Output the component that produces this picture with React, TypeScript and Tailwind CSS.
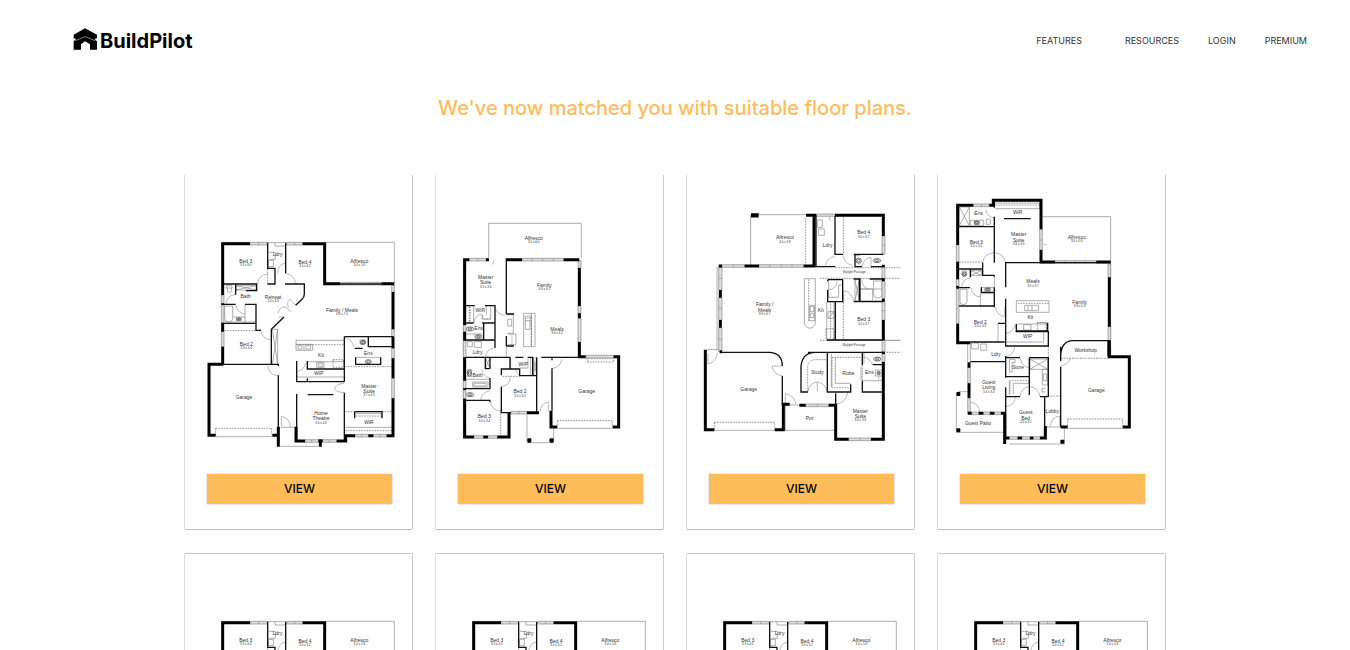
import React from "react";

type Label = { x: number; y: number; lines: string[]; size?: string };

type Plan = {
  name: string;
  viewBox: string;
  heavy: string;
  mid: string;
  light: string;
  doors: string;
  dashed: string;
  windows: string;
  fixtures: number[][];
  labels: Label[];
};

const planA: Plan = {
  name: "Four bedroom plan with home theatre",
  viewBox: "15 15 681 855",
  heavy:
    "M210 221H128V375M128 400V405M128 458V485M128 530V583M368 221H434V341H480M605 341H643M639 366V478M639 500V535M639 565V625M639 685V797H620M580 797H565M525 797H497V813H470M130 583H87V796H107M277 796H295V830M295 770V796M348 770V813H375M415 812H428M421 808V830",
  mid:
    "M263 218V295H285V342H262M317 218V310M132 342H230V362M230 347V362H198M167 342V374M167 403V403M132 403H167M195 403H228V460H132M228 460V481H243M315 342H373V372Q373 382 366 388L347 406M312 441L274 478V510M274 510V583M130 583H295V588M295 616V770M434 342H640M493 500V635M493 668V812M493 500H640M565 500V530H640M524 535H548M350 573V635H493M350 628V635M382 573V597H493M382 625V635M350 672V812M383 674H460M527 562V585M527 583H602V562M524 725V745M524 725H606V745",
  light:
    "M438 217H643V340M262 218H317M124 217H210M348 511H493M348 511V541H398V523H348M372 526V541M354 527H366V537H354ZM378 527H392V537H378ZM382 575H493M410 577H432V593H410ZM415 581H427V589H415ZM350 621H493M132 408H158V445Q158 455 145 455Q134 455 134 445V408M195 403V460M139 347H156V354H139ZM142 354V364Q148 371 154 364V354M265 271H280V290H265ZM267 247H286V268H268M168 347H228V360H168ZM168 347L228 360M168 360L228 347M277 478H293V583M277 478L293 583M293 478L277 583M160 441H195M169 441V452H184V441M527 562H602M495 772H640M526 730H604V742M300 829H415M302 772H348M107 800H277M285 218V228H315M540 510H555V522H540ZM132 456H228",
  doors:
    "M263 312Q236 314 233 342M317 310Q343 314 347 342M293 310Q295 282 315 280M138 402Q140 376 165 374M195 432Q172 430 168 404M243 481Q246 506 272 510M295 441L312 441M295 430Q295 415 312 410Q325 412 331 426M326 412Q318 398 330 388L347 406M264 588Q266 614 293 617M304 770V739Q329 743 332 772M493 640Q464 642 464 658Q468 666 493 668M495 503Q518 510 522 532M352 605Q372 600 378 578",
  dashed:
    "M134 482H228M263 297V340M350 524H490M459 569H490V592H459ZM107 775H275V794M107 775V796M495 590H638M495 725H524M606 725H638M528 738H602M495 782H638",
  windows:
    "M210 217H262V225H210ZM320 217H368V225H320ZM480 337H605V345H480ZM124 375H132V400H124ZM124 405H132V457H124ZM124 485H132V531H124ZM635 345H643V366H635ZM635 478H643V500H635ZM635 535H643V565H635ZM635 625H643V685H635ZM525 793H565V801H525ZM580 793H620V801H580ZM375 809H415V817H375ZM428 809H470V817H428ZM508 337V345M570 337V345M236 217V225M344 217V225M395 809V817M448 809V817M545 793V801M600 793V801",
  fixtures: [[565, 575, 9, 6], [176, 447, 6, 4], [549, 517, 8, 6]],
  labels: [
    { x: 197, y: 278, lines: ["Bed 3"], size: "3.3 x 4.0" },
    { x: 293, y: 259, lines: ["Ldry"] },
    { x: 375, y: 281, lines: ["Bed 4"], size: "3.0 x 3.2" },
    { x: 538, y: 278, lines: ["Alfresco"], size: "3.4 x 5.8" },
    { x: 197, y: 383, lines: ["Bath"] },
    { x: 279, y: 386, lines: ["Retreat"], size: "3.4 x 3.9" },
    { x: 486, y: 425, lines: ["Family / Meals"], size: "6.8 x 7.4" },
    { x: 199, y: 528, lines: ["Bed 2"], size: "3.3 x 4.0" },
    { x: 423, y: 561, lines: ["Kit"] },
    { x: 565, y: 555, lines: ["Ens"] },
    { x: 417, y: 615, lines: ["WIP"] },
    { x: 192, y: 686, lines: ["Garage"] },
    { x: 567, y: 653, lines: ["Master", "Suite"], size: "3.7 x 4.3" },
    { x: 423, y: 735, lines: ["Home", "Theatre"], size: "3.6 x 4.8" },
    { x: 567, y: 763, lines: ["WiR"] },
  ],
};

const planB: Plan = {
  name: "Narrow three bedroom plan",
  viewBox: "18 15 681 855",
  heavy:
    "M118 269H104V465M104 485V512M104 562V632M104 655V660M104 686V801H132M160 801H174M202 801H237V728M168 269H177M228 269H276M401 269H448M448 294V408M448 430V445M448 516V560H467M551 560H566V771H548M382 771H363V722M291 728H327M292 811H304M298 805V818M358 811H371M365 805V818",
  mid:
    "M229 265V432M229 432H252M229 528H252M229 498V528M107 407H134M165 407H195V534M107 459H131M156 459H193M161 459V510H107M161 510H193M107 562H229M229 562H240M240 562V597H214M214 595V616M214 597H269V617H320V728M302 617V617M256 562H280M293 562H308V617M320 562V728M334 562H448M366 565V571M366 595V722M180 562V596M166 562V596H180M180 624V656H107M107 691H180M180 691V696M214 650V728H243",
  light:
    "M176 265V160H454V265M171 265V272M131 407V459M182 407V447H157V434M169 407V434M281 430H315V530H281ZM304 430V530M286 438H300V478H286ZM286 452H300M290 444H296M229 434H250V490H233M233 448H245V468H233ZM233 492H258V524H233M113 515H127V530H113ZM133 515H154V532H133ZM104 512H193M229 530V562M107 562H180M242 562V594M268 594H294V565M302 562V614M310 564H320V615H310ZM310 564L320 615M320 564L310 615M167 565L179 594M179 565L167 594M107 492H135M135 492H156V506H135ZM113 599H125V620H113ZM128 636H174V651H128ZM132 640H168V648H132ZM291 734V818H371V775M382 775H548M100 265V805M451 272V560M107 628H180",
  doors:
    "M195 412Q200 432 223 436M132 459Q134 434 156 432M166 560Q170 538 193 534M180 624Q158 620 155 598M240 620Q244 644 214 650M152 690Q155 666 180 662M182 696Q184 720 212 723M330 725Q334 698 355 696V725M366 596Q394 590 395 568M192 270Q188 280 189 284",
  dashed:
    "M118 410V456M120 410V456M157 435V447H182M304 434V528M246 496V524M212 723V798M467 566H551V576H467M474 561V576M382 752H547V768M382 752V770M218 619H268M256 597L266 615",
  windows:
    "M118 265H168V273H118ZM276 265H401V273H276ZM444 272H453V294H444ZM444 408H453V430H444ZM444 445H453V516H444ZM467 556H551V564H467ZM132 797H160V805H132ZM174 797H202V805H174ZM243 724H291V732H243ZM100 465H108V485H100ZM100 512H108V562H100ZM100 632H108V655H100ZM100 662H108V686H100ZM306 265V273M338 265V273M370 265V273M143 265V273M267 724V732",
  fixtures: [[120, 477, 11, 6], [145, 499, 8, 5], [118, 609, 6, 9], [120, 674, 11, 6]],
  labels: [
    { x: 311, y: 210, lines: ["Alfresco"], size: "3.0 x 6.0" },
    { x: 167, y: 327, lines: ["Master", "Suite"], size: "3.9 x 3.6" },
    { x: 343, y: 350, lines: ["Family"], size: "4.0 x 6.2" },
    { x: 151, y: 425, lines: ["WiR"] },
    { x: 146, y: 481, lines: ["Ens"] },
    { x: 381, y: 483, lines: ["Meals"], size: "3.6 x 4.3" },
    { x: 143, y: 553, lines: ["Ldry"] },
    { x: 280, y: 589, lines: ["WIP"] },
    { x: 143, y: 622, lines: ["Bath"] },
    { x: 270, y: 670, lines: ["Bed 2"], size: "3.0 x 3.0" },
    { x: 470, y: 670, lines: ["Garage"] },
    { x: 163, y: 745, lines: ["Bed 3"], size: "3.0 x 3.4" },
  ],
};

const planC: Plan = {
  name: "Courtyard plan with study",
  viewBox: "15 15 681 855",
  heavy:
    "M207 138H230M207 134H230M372 136H402M396 136V288H365M459 136H604V198M396 144V286M604 284V292M604 325V334M604 386V395M604 450V511M604 545V552M604 576V808H567M500 808H461V706H440M371 706H352M188 288H231M110 288H120M115 360V383M115 450V473M113 545H120M70 540V779H97M278 779H304V703H323",
  mid:
    "M402 134V290H460M459 138V253H484M515 253H604M519 253V290H540M567 290H604M437 329H482V395H437V360M437 329V334M515 327H534V394M532 394H604M532 327V394M519 394H534M437 395V395M460 395H484M460 395V510M435 510H604M515 395H604M563 327H604M118 547H264Q301 550 301 588M301 618V705M357 668V590Q360 548 400 547H604M357 666H378M436 547V666H506V643M541 547V585M541 632V666H604M572 584V584M572 584H600M461 706V670M378 547H604",
  light:
    "M207 134H402M206 134V285M402 134H459M406 150H421V172H406ZM409 177H427V196H409ZM367 326H400V458A16 16 0 0 1 367 458ZM382 406H398V452H382ZM385 410H395V425H385ZM385 430H395V443H385ZM440 331V382H470V345H480M434 395V508M456 395V510M438 425H456V445H438ZM438 445L456 425M519 327V394M519 330L532 392M532 330L519 392M537 357H572V390M575 333H600V375Q598 384 588 384Q577 384 575 375ZM534 357H604M484 395V398M519 257H535M310 708V781H458M97 781H278M460 562V640H506M541 632H600M580 600H600V618H580ZM546 548V580M448 550V652M310 705H352M105 290V540M66 539H110M537 590V630M308 703H310",
  doors:
    "M430 286Q436 262 459 260M484 257Q488 282 512 286M540 290Q545 264 567 262V288M540 330Q542 354 560 357M485 394V362Q510 366 515 394M78 550V582Q104 576 106 548M301 588H270Q274 614 301 617M378 664Q380 640 406 636V664M406 636Q430 640 434 664M310 703V671Q338 676 342 703M497 668Q494 696 464 702M544 560Q568 568 571 584M440 360Q462 358 466 334M443 140Q440 150 447 153",
  dashed:
    "M371 145V284M484 140V252M380 328V455M414 325H655M460 293H655M435 511H655M414 511H655M605 547H655M484 397V508M446 395V508M432 476H456V507H432ZM97 757H278V776M97 757V778M377 665V590Q378 570 400 569H434M450 562H538M450 562V653H503M541 585V632M590 620V630",
  windows:
    "M402 132H459V139H402ZM231 284H365V292H231ZM120 284H188V292H120ZM110 292H120V360H110ZM110 383H120V450H110ZM110 473H120V545H110ZM600 198H609V252H600ZM600 292H609V325H600ZM600 334H609V386H600ZM600 395H609V450H600ZM600 511H609V545H600ZM600 552H609V576H600ZM371 702H440V710H371ZM500 804H567V812H500ZM263 284V292M298 284V292M330 284V292M154 284V292M406 702V710M533 804V812M110 325H120M110 415H120M110 508H120M600 225H609M600 422H609",
  fixtures: [[530, 272, 8, 8], [585, 272, 11, 6], [586, 567, 11, 6], [590, 609, 5, 5]],
  labels: [
    { x: 545, y: 193, lines: ["Bed 4"], size: "3.0 x 3.7" },
    { x: 309, y: 208, lines: ["Alfresco"], size: "4.0 x 3.8" },
    { x: 437, y: 231, lines: ["Ldry"] },
    { x: 248, y: 409, lines: ["Family /", "Meals"], size: "8.8 x 6.7" },
    { x: 416, y: 425, lines: ["Kit"] },
    { x: 545, y: 454, lines: ["Bed 3"], size: "3.0 x 3.7" },
    { x: 516, y: 315, lines: [], size: "Skylight Passage" },
    { x: 516, y: 535, lines: [], size: "Skylight Passage" },
    { x: 406, y: 612, lines: ["Study"] },
    { x: 499, y: 615, lines: ["Robe"] },
    { x: 562, y: 612, lines: ["Ens"] },
    { x: 200, y: 664, lines: ["Garage"] },
    { x: 535, y: 728, lines: ["Master", "Suite"], size: "3.6 x 3.8" },
    { x: 383, y: 750, lines: ["Por"] },
  ],
};

const planD: Plan = {
  name: "Plan with guest suite and workshop",
  viewBox: "18 15 681 855",
  heavy:
    "M124 106H77V225M77 275V328M77 348V356M77 461V518H115M172 106H184V91H327V178M327 240V276H369M493 276H536M532 322V470M532 511V560H592V771H572M407 771H386M111 577V593M111 640V684M107 730H119M140 730H154M174 730H187M207 730H218V822M218 804H232M257 804H270M294 804H304M324 804H340V768M73 672H85M79 666V678M73 781H85M79 775V787M385 815H397M391 809V821",
  mid:
    "M187 91V113M187 140V278M81 170H187M216 146H296M81 297H152V278M152 292V316H187M115 297V322M187 316V320M81 353H114M148 352V367H187M187 352V408M81 408H187M187 408V412M221 352V278H327M221 278V352M221 386V528H349V485H253V462M253 483H349M347 458V485M198 460H221M115 516H218M115 575H221M221 558V623M221 563H264M221 620H292M292 563V675M292 563H349V680M324 680H349M221 652V680H264M221 680V804M338 680V770M386 530V573M386 590V770M386 562Q386 515 420 512H532M386 553V563M528 512V560M327 278H536",
  light:
    "M331 140H536V274M187 99H323V116H190M82 111H112V167H82ZM82 111L112 167M112 111L82 167M115 151H155V167H115ZM127 154H142V164H127ZM163 147H175V163H163ZM253 392H351V427H253ZM278 406H320V422H278ZM288 406V422M300 406V422M256 462H345M275 464H297V480H275ZM316 458H343V482M117 302H148V316H117ZM117 302L148 316M148 302L117 316M90 303H104V315H90ZM148 352H187M158 354H176V364H158ZM84 358H105V395Q104 404 94 404Q84 404 84 395ZM145 371H187M145 371V406M198 460V516M335 486V516H224M119 519H139V537H119ZM146 522H163V541H146ZM107 520V575M232 568H249V578H240V606H232ZM294 567H347V598H294ZM294 567L347 598M347 567L294 598M331 598H347V645H331ZM334 612H344V632H334ZM340 655H330V666H340M232 632V674M244 640V672M244 640H290M79 665H107M73 678V787H214M232 822H397V775M340 771H386M407 775H572M536 276V322M536 470V560M115 519V575M187 320V350",
  doors:
    "M161 118Q166 142 187 144M152 278Q156 250 187 248Q216 250 221 278M89 350Q92 326 114 324M118 353Q120 378 145 381M190 412Q194 436 218 440V410M223 490Q246 486 250 464M221 560Q247 556 248 530M265 565Q268 590 292 593M264 680Q268 652 292 650Q320 652 324 680M221 710Q248 706 250 682M115 696Q140 700 143 726M355 770Q358 740 383 738V770M386 588Q412 582 414 565M334 222Q340 226 344 224",
  dashed:
    "M190 105H323M82 276H152M257 400H350M316 458H343V482H316ZM349 530V563M388 565H528M407 747H572V768M407 747V770M340 678H386M232 632H290V640M234 636V674",
  windows:
    "M124 102H172V110H124ZM73 225H81V275H73ZM73 328H81V348H73ZM73 358H81V408H73ZM73 412H81V461H73ZM323 178H331V240H323ZM369 272H493V280H369ZM528 282H536V322H528ZM528 470H536V511H528ZM528 532H536V558H528ZM107 593H115V640H107ZM107 686H115V726H107ZM119 726H140V734H119ZM154 726H174V734H154ZM187 726H207V734H187ZM232 800H257V808H232ZM270 800H294V808H270ZM304 800H324V808H304ZM398 272V280M430 272V280M460 272V280M148 102V110M323 210H331",
  fixtures: [[134, 158, 7, 5], [97, 313, 6, 7], [167, 358, 7, 4]],
  labels: [
    { x: 140, y: 135, lines: ["Ens"] },
    { x: 257, y: 132, lines: ["WiR"] },
    { x: 260, y: 199, lines: ["Master", "Suite"], size: "3.8 x 3.9" },
    { x: 133, y: 221, lines: ["Bed 3"], size: "3.0 x 3.0" },
    { x: 434, y: 207, lines: ["Alfresco"], size: "3.6 x 5.8" },
    { x: 303, y: 340, lines: ["Meals"], size: "3.5 x 3.7" },
    { x: 443, y: 402, lines: ["Family"], size: "6.8 x 5.0" },
    { x: 295, y: 446, lines: ["Kit"] },
    { x: 145, y: 461, lines: ["Bed 2"], size: "3.0 x 4.0" },
    { x: 287, y: 504, lines: ["WIP"] },
    { x: 192, y: 557, lines: ["Ldry"] },
    { x: 461, y: 545, lines: ["Workshop"] },
    { x: 258, y: 598, lines: ["Store"] },
    { x: 170, y: 642, lines: ["Guest", "Living"], size: "3.4 x 3.4" },
    { x: 493, y: 666, lines: ["Garage"] },
    { x: 281, y: 733, lines: ["Guest", "Bed"], size: "3.3 x 3.2" },
    { x: 361, y: 728, lines: ["Lobby"] },
    { x: 138, y: 765, lines: ["Guest Patio"] },
  ],
};

function FloorPlan({ plan }: { plan: Plan }) {
  return (
    <svg viewBox={plan.viewBox} className="block h-auto w-full" role="img" aria-label={plan.name} fill="none">
      <path d={plan.light} stroke="#858585" strokeWidth="2" />
      <path d={plan.doors} stroke="#999" strokeWidth="2" />
      <path d={plan.dashed} stroke="#666" strokeWidth="2" strokeDasharray="5 3" />
      <g stroke="#333" strokeWidth="2">
        {plan.fixtures.map(([x, y, rx, ry]) => (
          <g key={`${x}-${y}`}>
            <ellipse cx={x} cy={y} rx={rx} ry={ry} />
            <ellipse cx={x} cy={y} rx={rx / 2} ry={ry / 2} />
          </g>
        ))}
      </g>
      <path d={plan.windows} fill="#dcdcdc" stroke="#8a8a8a" strokeWidth="2" />
      <path d={plan.mid} stroke="#111" strokeWidth="4" />
      <path d={plan.heavy} stroke="#000" strokeWidth="9" />
      <g fill="#333" textAnchor="middle" className="font-['Liberation_Sans',sans-serif]">
        {plan.labels.map((label) => (
          <g key={`${label.x}-${label.y}`}>
            {label.lines.map((line, i) => (
              <text key={line} x={label.x} y={label.y + i * 16} fontSize="15">
                {line}
              </text>
            ))}
            {label.size && (
              <text x={label.x} y={label.y + label.lines.length * 16 - 6} fontSize="9">
                {label.size}
              </text>
            )}
          </g>
        ))}
      </g>
    </svg>
  );
}

function PlanCard({ plan, first }: { plan: Plan; first: boolean }) {
  return (
    <article
      className={
        first
          ? "rounded-b-xs border border-t-0 border-[#dcdcdc] border-r-[#c8c8c8] border-b-[#bdbdbd] pb-[25px]"
          : "rounded-xs border border-[#dcdcdc] border-t-[#c8c8c8] border-r-[#c8c8c8] border-b-[#bdbdbd] pb-[25px]"
      }
    >
      <FloorPlan plan={plan} />
      <div className="mt-[14px] pr-5 pl-[22px]">
        <button
          type="button"
          className="block h-[30px] w-full cursor-pointer bg-[#ffbd59] text-xs font-medium text-black shadow-[0_0_1px_rgba(0,0,0,0.5)]"
        >
          VIEW
        </button>
      </div>
    </article>
  );
}

function Logo() {
  return (
    <a href="#home" className="flex items-end gap-[2px] text-black">
      <svg viewBox="0 0 75 66" className="h-[22px] w-[25px]" aria-hidden="true">
        <path d="M2 20 36 1 72 20V65H51V49L36 40 24 49V65H2Z" fill="#000" />
        <path d="M7 38 36 26 67 38" fill="none" stroke="#fff" strokeWidth="1.5" />
        <path d="M1 30 9 33 1 41ZM73 30 65 33 73 41Z" fill="#fff" />
      </svg>
      <span className="text-xl leading-[18px] font-bold">BuildPilot</span>
    </a>
  );
}

const plans = [planA, planB, planC, planD, planA, planA, planA, planA];

export default function App() {
  return (
    <div className="min-h-screen overflow-x-hidden bg-white font-['Inter',sans-serif]">
      <header className="flex h-[82px] items-center justify-between pr-[43px] pl-[73px]">
        <div className="pb-1">
          <Logo />
        </div>
        <nav className="flex gap-[29px] text-[9px] text-[#333]">
          <a href="#features" className="pr-[14px]">FEATURES</a>
          <a href="#resources">RESOURCES</a>
          <a href="#login">LOGIN</a>
          <a href="#premium">PREMIUM</a>
        </nav>
      </header>
      <main>
        <h1 className="pt-3 text-center text-xl leading-7 font-medium text-[#ffbd59]">
          We've now matched you with suitable floor plans.
        </h1>
        <section className="mx-auto mt-[53px] grid max-w-[982px] grid-cols-4 gap-x-[22px] gap-y-[23px]">
          {plans.map((plan, i) => (
            <PlanCard key={i} plan={plan} first={i < 4} />
          ))}
        </section>
      </main>
    </div>
  );
}
